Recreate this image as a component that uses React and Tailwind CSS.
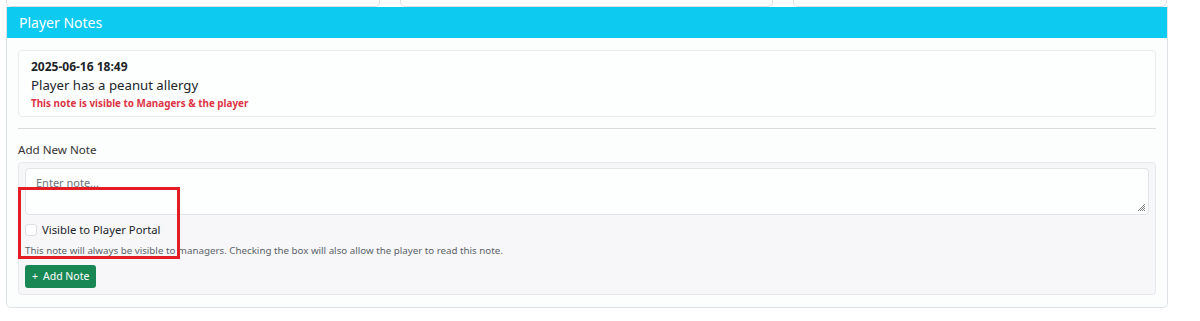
import React from "react";

export default function App() {
  return (
    <div className="w-[1200px] h-[321px] bg-white overflow-hidden relative" style={{ fontFamily: '"Noto Sans", "Open Sans", sans-serif' }}>
      {/* top cards strip */}
      <div className="flex gap-[20px] pl-[6px] pr-[33px] h-[7px]">
        <div className="flex-1 h-[7px] border-b border-x border-[#dcdfe2] rounded-b-[5px] bg-[#fdfefe]"></div>
        <div className="flex-1 h-[7px] border-b border-x border-[#dcdfe2] rounded-b-[5px] bg-[#fdfefe]"></div>
        <div className="flex-1 h-[7px] border-b border-x border-[#dcdfe2] rounded-b-[5px] bg-[#fdfefe]"></div>
      </div>
      {/* panel */}
      <div className="ml-[6px] w-[1162px] h-[301px] border-x border-b border-[#dee2e6] rounded-b-[5px] bg-[#fcfdfd]">
        <div className="h-[31px] bg-[#0dcaf0] flex items-center pl-[12px] text-white text-[14px]">Player Notes</div>
        <div className="px-[11px] pt-[12px]">
          <div className="h-[67px] border border-[#e9ecef] rounded-[4px] bg-[#fdfefe] pl-[12px] pt-[7px]">
            <div className="text-[12px] font-bold text-[#212529] leading-[18px]">2025-06-16 18:49</div>
            <div className="text-[13.2px] text-[#212529] leading-[18px]">Player has a peanut allergy</div>
            <div className="text-[9.9px] font-bold text-[#dc3545] leading-[18px]">This note is visible to Managers &amp; the player</div>
          </div>
          <div className="mt-[11px] border-t border-[#d9dbdd]"></div>
          <div className="mt-[12px] text-[11.6px] text-[#333] leading-[18px]">Add New Note</div>
          <div className="mt-[3px] h-[133px] border border-[#e6e8eb] rounded-[4px] bg-[#f7f7f9] px-[6px] pt-[5px]">
            <div className="relative h-[47px] border border-[#e2e4e8] rounded-[4px] bg-[#fdfefe] pl-[10px] pt-[6px] text-[11px] text-[#6c757d]">
              Enter note...
              <svg className="absolute right-[2px] bottom-[2px]" width="10" height="10" viewBox="0 0 10 10">
                <path d="M9 2 L2 9 M9 4 L4 9 M9 6 L6 9 M9 8 L8 9" stroke="#888" strokeWidth="1" />
              </svg>
            </div>
            <div className="mt-[8px] flex items-center gap-[5px] h-[14px]">
              <div className="w-[12px] h-[12px] border border-[#dcdfe2] rounded-[3px] bg-white"></div>
              <span className="text-[11.3px] text-[#212529]">Visible to Player Portal</span>
            </div>
            <div className="mt-[7px] text-[9.75px] text-[#5c636a] leading-[14px]">This note will always be visible to managers. Checking the box will also allow the player to read this note.</div>
            <div className="mt-[7px] inline-flex items-center h-[23px] px-[7px] rounded-[3px] bg-[#198754] text-white text-[10.5px] gap-[5px]">
              <span>+</span>
              <span>Add Note</span>
            </div>
          </div>
        </div>
      </div>
      {/* red annotation */}
      <div className="absolute left-[18px] top-[187px] w-[162px] h-[72px] border-[3px] border-[#e21d24]"></div>
    </div>
  );
}
